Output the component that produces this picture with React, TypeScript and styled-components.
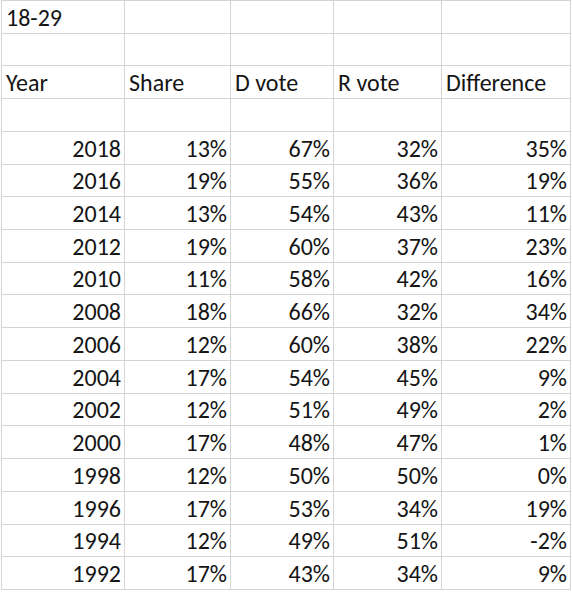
import React from "react";
import styled, { createGlobalStyle } from "styled-components";

const Global = createGlobalStyle`
  html, body { margin: 0; padding: 0; background: #fff; }
  body { font-family: Carlito, Lato, "Open Sans", sans-serif; }
`;

const Sheet = styled.div`
  display: grid;
  grid-template-columns: 123px 106px 103px 108px 129px;
  grid-auto-rows: 32.72px;
  margin-left: 1px;
  width: max-content;
  border-left: 1px solid #d4d4d4;
  border-top: 1px solid #d4d4d4;
`;

const Cell = styled.div<{ $align?: "left" | "right" }>`
  box-sizing: border-box;
  border-right: 1px solid #d4d4d4;
  border-bottom: 1px solid #d4d4d4;
  display: flex;
  align-items: flex-end;
  justify-content: ${(p) => (p.$align === "right" ? "flex-end" : "flex-start")};
  padding: 0 3px 2px 4px;
  font-size: 24px;
  line-height: 26px;
  color: #151515;
  white-space: nowrap;
  overflow: hidden;
`;

const rows: [string, string, string, string, string][] = [
  ["2018", "13%", "67%", "32%", "35%"],
  ["2016", "19%", "55%", "36%", "19%"],
  ["2014", "13%", "54%", "43%", "11%"],
  ["2012", "19%", "60%", "37%", "23%"],
  ["2010", "11%", "58%", "42%", "16%"],
  ["2008", "18%", "66%", "32%", "34%"],
  ["2006", "12%", "60%", "38%", "22%"],
  ["2004", "17%", "54%", "45%", "9%"],
  ["2002", "12%", "51%", "49%", "2%"],
  ["2000", "17%", "48%", "47%", "1%"],
  ["1998", "12%", "50%", "50%", "0%"],
  ["1996", "17%", "53%", "34%", "19%"],
  ["1994", "12%", "49%", "51%", "-2%"],
  ["1992", "17%", "43%", "34%", "9%"],
];

const headers = ["Year", "Share", "D vote", "R vote", "Difference"];

export default function App() {
  return (
    <>
      <Global />
      <Sheet>
        <Cell>18-29</Cell>
        {[0, 1, 2, 3].map((i) => (
          <Cell key={`a${i}`} />
        ))}
        {[0, 1, 2, 3, 4].map((i) => (
          <Cell key={`b${i}`} />
        ))}
        {headers.map((h) => (
          <Cell key={h}>{h}</Cell>
        ))}
        {[0, 1, 2, 3, 4].map((i) => (
          <Cell key={`c${i}`} />
        ))}
        {rows.map((r) =>
          r.map((v, j) => (
            <Cell key={`${r[0]}-${j}`} $align="right">
              {v}
            </Cell>
          ))
        )}
      </Sheet>
    </>
  );
}
